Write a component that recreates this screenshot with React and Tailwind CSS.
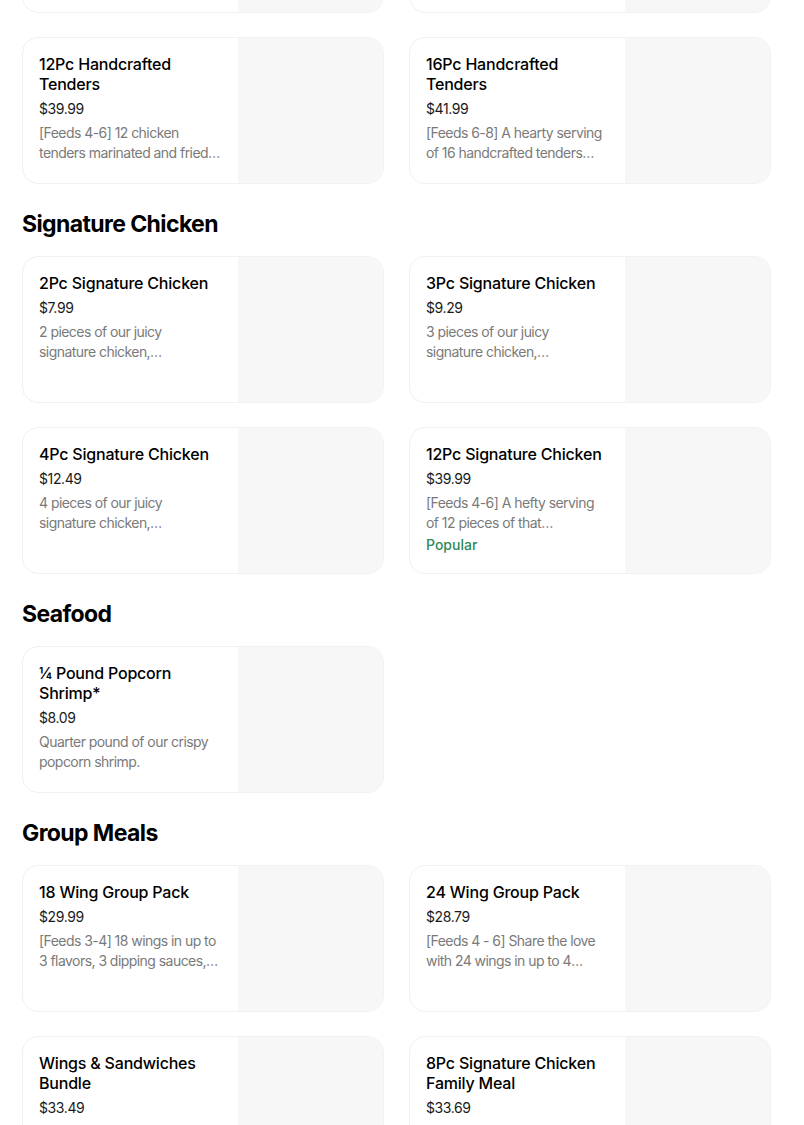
import React from 'react';

const sections = [
  {
    title: null,
    items: [
      { name: '8Pc Handcrafted Tenders', price: '$24.99', desc: '[Feeds 2-3] 8 chicken tenders marinated and fried.' },
      { name: '10Pc Handcrafted Tenders', price: '$29.99', desc: '[Feeds 3-4] 10 chicken tenders marinated and fried.' },
      { name: '12Pc Handcrafted Tenders', price: '$39.99', desc: '[Feeds 4-6] 12 chicken tenders marinated and fried to perfection.' },
      { name: '16Pc Handcrafted Tenders', price: '$41.99', desc: '[Feeds 6-8] A hearty serving of 16 handcrafted tenders marinated and fried.' },
    ],
  },
  {
    title: 'Signature Chicken',
    items: [
      { name: '2Pc Signature Chicken', price: '$7.99', desc: '2 pieces of our juicy signature\u00a0chicken, handbreaded and fried.' },
      { name: '3Pc Signature Chicken', price: '$9.29', desc: '3 pieces of our juicy signature\u00a0chicken, handbreaded and fried.' },
      { name: '4Pc Signature Chicken', price: '$12.49', desc: '4 pieces of our juicy signature\u00a0chicken, handbreaded and fried.' },
      { name: '12Pc Signature Chicken', price: '$39.99', desc: '[Feeds 4-6] A hefty serving of 12 pieces of that mouthwatering chicken.', tag: 'Popular' },
    ],
  },
  {
    title: 'Seafood',
    items: [
      { name: '¼ Pound Popcorn Shrimp*', price: '$8.09', desc: 'Quarter pound of our crispy popcorn shrimp.' },
    ],
  },
  {
    title: 'Group Meals',
    items: [
      { name: '18 Wing Group Pack', price: '$29.99', desc: '[Feeds 3-4] 18 wings in up to 3 flavors, 3 dipping sauces, and sides.' },
      { name: '24 Wing Group Pack', price: '$28.79', desc: '[Feeds 4 - 6] Share the love with 24 wings in up to 4 flavors.' },
      { name: 'Wings & Sandwiches Bundle', price: '$33.49', desc: '[Feeds 3-4] 12 wings and 2 sandwiches with sides.' },
      { name: '8Pc Signature Chicken Family Meal', price: '$33.69', desc: '[Feeds 3-4] 8 pieces of signature chicken with sides.' },
    ],
  },
];

const ItemCard = ({ item }) => (
  <div className="flex h-[147px] overflow-hidden rounded-2xl border border-[#f1f1f1] bg-white">
    <div className="flex-1 min-w-0 px-4 pt-4">
      <div className="text-[16px] leading-5 font-medium text-black tracking-[-0.2px]">{item.name}</div>
      <div className="mt-[5px] text-[14px] leading-5 text-[#1a1a1a] tracking-[-0.4px]">{item.price}</div>
      <div className="mt-1 h-10 text-[14px] leading-5 text-[#7a7a7a] tracking-[-0.55px] line-clamp-2">{item.desc}</div>
      {item.tag && (
        <div className="mt-[2px] text-[14px] leading-5 font-medium text-[#2e8a57]">{item.tag}</div>
      )}
    </div>
    <div className="w-[145px] shrink-0 bg-[#f7f7f7]" />
  </div>
);

export default function App() {
  return (
    <div
      className="min-h-screen bg-white overflow-hidden pl-[22px]"
      style={{ fontFamily: 'Inter, "Noto Sans", sans-serif' }}
    >
      {sections.map((section, i) => (
        <div key={i}>
          {section.title && (
            <h2 className="mt-6 mb-4 text-[23px] leading-8 font-bold text-black tracking-[-0.6px]">
              {section.title}
            </h2>
          )}
          <div className={`grid w-[749px] grid-cols-2 gap-x-[25px] gap-y-6 ${i === 0 ? '-mt-[134px]' : ''}`}>
            {section.items.map((item, j) => (
              <ItemCard key={j} item={item} />
            ))}
          </div>
        </div>
      ))}
    </div>
  );
}
